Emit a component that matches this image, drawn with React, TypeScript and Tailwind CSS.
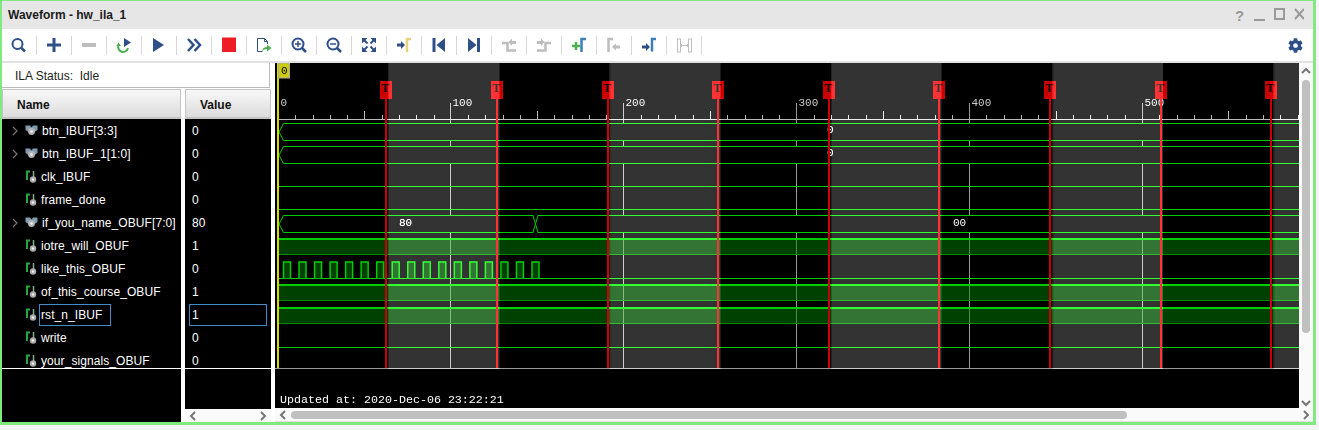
import { FaCog } from 'react-icons/fa';

const NAVY = '#2f4f88';
const GRAY = '#bdbdbd';
const BLUE = '#3a7fb5';
const YELLOW = '#e8d27c';
const GREEN = '#4caf50';

function Corner({ rotate }: { rotate: number }) {
  return (
    <g transform={`rotate(${rotate} 10 10)`}>
      <polygon points="3,3 8.5,3 3,8.5" fill={NAVY} />
      <line x1="5" y1="5" x2="8.5" y2="8.5" stroke={NAVY} strokeWidth="2" />
    </g>
  );
}

const toolbarIcons = [
  <>
    <circle cx="8.5" cy="9" r="5" fill="none" stroke={NAVY} strokeWidth="2" />
    <line x1="12.5" y1="13" x2="16" y2="16.5" stroke={NAVY} strokeWidth="2.5" />
  </>,
  <path d="M8.5 3h3v5.5H17v3h-5.5V17h-3v-5.5H3v-3h5.5z" fill={NAVY} />,
  <rect x="3" y="8" width="14" height="4" fill={GRAY} />,
  <>
    <polygon points="10,3 17,7.5 10,12" fill={NAVY} />
    <path d="M4.5 10a5 5 0 1 0 9.5 3" fill="none" stroke={GREEN} strokeWidth="2" />
    <polygon points="2.5,11 7,11 4.5,7.5" fill={GREEN} />
  </>,
  <polygon points="4,3 15,10 4,17" fill={NAVY} />,
  <>
    <polyline points="4,4 9.5,10 4,16" fill="none" stroke={NAVY} strokeWidth="2.5" />
    <polyline points="10.5,4 16,10 10.5,16" fill="none" stroke={NAVY} strokeWidth="2.5" />
  </>,
  <rect x="3" y="2.5" width="14" height="14.5" fill="#ee1c24" />,
  <>
    <path d="M8.5 16.5H3.5v-13h7l3 3v2.5M10.5 3.5v3h3" fill="none" stroke={NAVY} strokeWidth="1" />
    <path d="M8 16q1-4 5-4V9.5l4.5 3.5-4.5 3.5V14q-3 0-5 2z" fill={GREEN} />
  </>,
  <>
    <circle cx="9" cy="9" r="5.5" fill="none" stroke={NAVY} strokeWidth="2" />
    <line x1="13" y1="13" x2="17" y2="17" stroke={NAVY} strokeWidth="2.5" />
    <path d="M6 9h6M9 6v6" stroke={NAVY} strokeWidth="1.5" />
  </>,
  <>
    <circle cx="9" cy="9" r="5.5" fill="none" stroke={NAVY} strokeWidth="2" />
    <line x1="13" y1="13" x2="17" y2="17" stroke={NAVY} strokeWidth="2.5" />
    <path d="M6 9h6" stroke={NAVY} strokeWidth="1.5" />
  </>,
  <>
    <Corner rotate={0} />
    <Corner rotate={90} />
    <Corner rotate={180} />
    <Corner rotate={270} />
  </>,
  <>
    <polygon points="3,8.5 7,8.5 7,6 11,10 7,14 7,11.5 3,11.5" fill={NAVY} />
    <path d="M13 17V4h4" fill="none" stroke={YELLOW} strokeWidth="2.5" />
  </>,
  <>
    <rect x="3.5" y="3" width="3" height="14" fill={NAVY} />
    <polygon points="16,3 7.5,10 16,17" fill={NAVY} />
  </>,
  <>
    <polygon points="4,3 12.5,10 4,17" fill={NAVY} />
    <rect x="13" y="3" width="3" height="14" fill={NAVY} />
  </>,
  <>
    <path d="M3 8h5.5v7.5H17" fill="none" stroke={GRAY} strokeWidth="2.5" />
    <polygon points="9.5,7 13,3.5 13,6 17,6 17,9 13,9 13,11" fill={GRAY} />
  </>,
  <>
    <path d="M17 8h-5.5v7.5H3" fill="none" stroke={GRAY} strokeWidth="2.5" />
    <polygon points="10.5,7 7,3.5 7,6 3,6 3,9 7,9 7,11" fill={GRAY} />
  </>,
  <>
    <path d="M3 11h8M7 7v8" stroke={GREEN} strokeWidth="2.5" />
    <path d="M12.5 17V4H17" fill="none" stroke={BLUE} strokeWidth="2.5" />
  </>,
  <>
    <path d="M4.5 17V4H9" fill="none" stroke={GRAY} strokeWidth="2.5" />
    <polygon points="8,12 12,8.5 12,10.5 16,10.5 16,13.5 12,13.5 12,15.5" fill={GRAY} />
  </>,
  <>
    <polygon points="3,10.5 7,10.5 7,8 11,12 7,16 7,13.5 3,13.5" fill={NAVY} />
    <path d="M13 16.5V4h4" fill="none" stroke={BLUE} strokeWidth="2.5" />
  </>,
  <>
    <rect x="3.5" y="4" width="3" height="13" fill="none" stroke={GRAY} strokeWidth="1" />
    <rect x="14.5" y="4" width="3" height="13" fill="none" stroke={GRAY} strokeWidth="1" />
    <path d="M7 10.5h7M8 9l-1.5 1.5L8 12M13 9l1.5 1.5L13 12" fill="none" stroke={GRAY} strokeWidth="1" />
  </>,
];

function BusIcon() {
  return (
    <svg width="13" height="11" viewBox="0 0 13 11" className="shrink-0">
      <path d="M0.5 0.5h4.5l1.5 2 1.5-2h4.5v4.5l-3 2h-6l-3-2z" fill="#7f9bb0" />
      <circle cx="6.5" cy="6.5" r="3.4" fill="#b5b5b5" />
      <circle cx="6.5" cy="6.5" r="1.3" fill="#eee" />
    </svg>
  );
}

function WireIcon() {
  return (
    <svg width="12" height="13" viewBox="0 0 12 13" className="shrink-0">
      <path d="M2 10V1.5H5" fill="none" stroke="#22a83f" strokeWidth="2" />
      <path d="M8.5 1v6" fill="none" stroke="#7fb08a" strokeWidth="1.5" />
      <circle cx="8" cy="9.5" r="3.2" fill="#aaa" />
      <circle cx="8" cy="9.5" r="1.2" fill="#eee" />
    </svg>
  );
}

function Chevron({ dir, thin }: { dir: 'up' | 'down' | 'left' | 'right'; thin?: boolean }) {
  const points = {
    up: '1,7 5,3 9,7',
    down: '1,3 5,7 9,3',
    left: '7,1 3,5 7,9',
    right: '3,1 7,5 3,9',
  }[dir];
  return (
    <svg width="10" height="10" viewBox="0 0 10 10" className="shrink-0">
      <polyline points={points} fill="none" stroke="#757575" strokeWidth={thin ? 1.2 : 2} />
    </svg>
  );
}

const signals = [
  { name: 'btn_IBUF[3:3]', value: '0', bus: true },
  { name: 'btn_IBUF_1[1:0]', value: '0', bus: true },
  { name: 'clk_IBUF', value: '0', bus: false },
  { name: 'frame_done', value: '0', bus: false },
  { name: 'if_you_name_OBUF[7:0]', value: '80', bus: true },
  { name: 'iotre_will_OBUF', value: '1', bus: false },
  { name: 'like_this_OBUF', value: '0', bus: false },
  { name: 'of_this_course_OBUF', value: '1', bus: false },
  { name: 'rst_n_IBUF', value: '1', bus: false, selected: true },
  { name: 'write', value: '0', bus: false },
  { name: 'your_signals_OBUF', value: '0', bus: false },
];

const LINE = '#00cc00';
const rowTop = (i: number) => 119 + 23 * i;

// vertical markers and the shaded clock bands behind them
const markers = [386, 497, 608, 718, 829, 939, 1050, 1161, 1271];
const bands = [
  [388, 499.5],
  [609.5, 720.5],
  [831, 941.5],
  [1052.5, 1163],
  [1273.5, 1299],
];
const ticks = Array.from({ length: 60 }, (_, j) => j);
const pulses = Array.from({ length: 17 }, (_, j) => 283.5 + 15.53 * j);

function Solid({ i }: { i: number }) {
  const top = rowTop(i);
  return (
    <>
      <rect x="279" y={top + 5} width="1020" height="16" fill="#008000" fillOpacity="0.5" />
      <line x1="279" x2="1299" y1={top + 5} y2={top + 5} stroke={LINE} strokeWidth="2" />
      <line x1="279" x2="1299" y1={top + 20.5} y2={top + 20.5} stroke="#008800" />
    </>
  );
}

function Low({ i }: { i: number }) {
  return <line x1="279" x2="1299" y1={rowTop(i) + 21.5} y2={rowTop(i) + 21.5} stroke={LINE} />;
}

function Bus({ i }: { i: number }) {
  const top = rowTop(i);
  const hi = top + 4.5;
  const lo = top + 21.5;
  return (
    <>
      <rect x="279" y={hi} width="1020" height="17" fill="#000" />
      <path
        d={`M1299 ${hi}H283.5L279 ${top + 13}L283.5 ${lo}H1299`}
        fill="none"
        stroke={LINE}
      />
    </>
  );
}

function WaveCanvas() {
  return (
    <svg width="1024" height="345" viewBox="275 63 1024 345" className="isolate block bg-black">
      {/* time grid and ruler */}
      {[450.5, 623.5, 796.5, 969.5, 1142.5].map((x) => (
        <line key={x} x1={x} x2={x} y1="103" y2="368" stroke="#999" />
      ))}
      <line x1="278" x2="1299" y1="119.5" y2="119.5" stroke="#bbb" />
      {ticks.map((j) => {
        if (j % 10 === 0) return null;
        const x = Math.round(278 + 17.28 * j) + 0.5;
        return <line key={j} x1={x} x2={x} y1={j % 5 === 0 ? 111 : 115} y2="119" stroke="#bbb" />;
      })}
      {[
        ['0', 280.5],
        ['100', 452.5],
        ['200', 625.5],
        ['300', 798.5],
        ['400', 971.5],
        ['500', 1144.5],
      ].map(([label, x]) => (
        <text key={label} x={x} y="106" fill="#ccc" fontSize="11" fontFamily="'Liberation Mono', monospace">
          {label}
        </text>
      ))}
      <line x1="275" x2="1299" y1="368.5" y2="368.5" stroke="#999" />

      {/* traces */}
      <Bus i={0} />
      <Bus i={1} />
      <Low i={2} />
      <Low i={3} />
      <Bus i={4} />
      <Solid i={5} />
      <Low i={6} />
      <Solid i={7} />
      <Solid i={8} />
      <Low i={9} />
      <rect x="533.5" y="214" width="4" height="20" fill="#000" />
      <path d="M533 215.5L538 232.5M533 232.5L538 215.5" fill="none" stroke={LINE} />
      {pulses.map((x) => (
        <g key={x}>
          <rect x={x} y="261.5" width="7" height="17" fill="#008000" fillOpacity="0.5" />
          <path d={`M${x} 278V262H${x + 7}V278`} fill="none" stroke={LINE} strokeWidth="1.5" />
        </g>
      ))}
      <g fill="#fff" fontSize="11" fontFamily="'Liberation Mono', monospace">
        <text x="827" y="133">0</text>
        <text x="827" y="156">0</text>
        <text x="399" y="226">80</text>
        <text x="953" y="226">00</text>
      </g>

      {/* triggers */}
      {markers.map((x) => (
        <g key={x}>
          <rect x={x - 1} y="99" width="2" height="269" fill="#cc0000" />
          <rect x={x - 6} y="81" width="12" height="18" fill="#cc0000" />
          <text
            x={x - 0.5}
            y="92"
            textAnchor="middle"
            fill="#000"
            fontSize="12"
            fontFamily="'Liberation Serif', serif"
            fontWeight="bold"
          >
            T
          </text>
        </g>
      ))}

      {/* bands add light over whatever is under them */}
      {bands.map(([a, b]) => (
        <g key={a} className="mix-blend-plus-lighter">
          <rect x={a} y="63" width={b - a} height="306" fill="#333" />
          <line x1={a + 0.5} x2={a + 0.5} y1="63" y2="369" stroke="#222" />
        </g>
      ))}

      {/* cursor */}
      <rect x="277" y="63" width="2" height="305" fill="#d8d800" />
      <rect x="278.5" y="63" width="11" height="15" fill="#cccc00" stroke="#aaa" strokeWidth="1" />
      <text x="281" y="74" fill="#000" fontSize="11" fontFamily="'Liberation Mono', monospace">0</text>

      <text x="280" y="403" fill="#fff" fontSize="11.67" fontFamily="'Liberation Mono', monospace">
        Updated at: 2020-Dec-06 23:22:21
      </text>
    </svg>
  );
}

export default function App() {
  return (
    <div className="h-[430px] w-[1319px] bg-[#f5f5f5] font-['Liberation_Sans',Arial,sans-serif] text-[12px]">
      <div className="flex h-[425px] w-[1316px] flex-col border-t border-r-[3px] border-b-[3px] border-l-2 border-[#80ea80] bg-white">
        {/* Title bar */}
        <div className="flex h-[28px] items-center justify-between bg-[#e6e6e6] pr-[9px] pl-[6px]">
          <span className="font-bold text-[#1a1a1a]">Waveform - hw_ila_1</span>
          <div className="flex items-center text-[#999]">
            <span className="w-[19px] text-[15px] leading-none font-bold">?</span>
            <svg width="50" height="14" viewBox="0 0 50 14">
              <rect x="0" y="11" width="11" height="2" fill="#999" />
              <rect x="21" y="1" width="9" height="10" fill="none" stroke="#999" strokeWidth="2" />
              <path d="M41 1l9 10M50 1l-9 10" stroke="#999" strokeWidth="2" />
            </svg>
          </div>
        </div>

        {/* Toolbar */}
        <div className="flex h-[34px] items-center justify-between border-b-2 border-[#e2e2e2] pr-[10px]">
          <div className="flex items-center">
            {toolbarIcons.map((icon, i) => (
              <div key={i} className="flex items-center">
                <div className="flex w-[34px] justify-center">
                  <svg width="20" height="20" viewBox="0 0 20 20">
                    {icon}
                  </svg>
                </div>
                <div className="h-[19px] w-px bg-[#d8d8d8]" />
              </div>
            ))}
          </div>
          <FaCog size={15} color={NAVY} />
        </div>

        <div className="flex min-h-0 flex-1">
          {/* Signal list */}
          <div className="flex w-[273px] flex-col">
            <div className="mr-[5px] flex h-[25px] items-center border-r border-b border-[#bbb] pt-[2px] pl-[13px] text-[#222]">
              ILA Status:&nbsp; Idle
            </div>
            <div className="flex min-h-0 flex-1 pt-[1px]">
              <div className="flex w-[179px] flex-col bg-black">
                <div className="flex h-[30px] items-center border border-b-2 border-[#c4c4c4] bg-gradient-to-b from-[#f8f8f8] to-[#dcdcdc] pt-[2px] pl-[14px] font-bold text-[#111]">
                  Name
                </div>
                <div className="h-[250px] overflow-hidden border-b border-white">
                  {signals.map((s) => (
                    <div key={s.name} className="flex h-[23px] items-center text-white">
                      <div className="flex w-[23px] shrink-0 justify-end pr-[5px]">
                        {s.bus && <Chevron dir="right" thin />}
                      </div>
                      <div className="flex w-[16px] shrink-0 justify-start">
                        {s.bus ? <BusIcon /> : <WireIcon />}
                      </div>
                      <span
                        className={
                          s.selected
                            ? '-ml-[2px] flex h-[22px] w-[72px] items-center border border-[#3f8ccb] pl-[1px] tracking-[0.08px]'
                            : s.bus
                              ? 'ml-[1px] whitespace-nowrap tracking-[0.08px]'
                              : 'whitespace-nowrap tracking-[0.08px]'
                        }
                      >
                        {s.name}
                      </span>
                    </div>
                  ))}
                </div>
              </div>
              <div className="ml-[4px] flex w-[86px] flex-col bg-black">
                <div className="flex h-[30px] items-center border border-b-2 border-[#c4c4c4] bg-gradient-to-b from-[#f8f8f8] to-[#dcdcdc] pt-[2px] pl-[14px] font-bold text-[#111]">
                  Value
                </div>
                <div className="h-[250px] overflow-hidden border-b border-white">
                  {signals.map((s) => (
                    <div key={s.name} className="flex h-[23px] items-center px-[4px] text-white">
                      <span
                        className={
                          s.selected
                            ? 'flex h-[22px] w-[78px] items-center border border-[#3f8ccb] pl-[2px]'
                            : 'pl-[3px]'
                        }
                      >
                        {s.value}
                      </span>
                    </div>
                  ))}
                </div>
                <div className="flex-1" />
                <div className="flex h-[13px] items-center justify-between bg-[#fafafa] px-[3px]">
                  <Chevron dir="left" />
                  <Chevron dir="right" />
                </div>
              </div>
            </div>
          </div>

          {/* Waveform */}
          <div className="flex flex-1 flex-col">
            <div className="flex h-[345px]">
              <WaveCanvas />
              <div className="flex w-[14px] flex-col items-center bg-[#fafafa] pt-[3px] pr-[1px]">
                <Chevron dir="up" />
                <div className="mt-[4px] h-[253px] w-[8px] rounded-full bg-[#c0c0c0]" />
                <div className="flex-1" />
                <Chevron dir="down" />
              </div>
            </div>
            <div className="flex h-[13px] items-center bg-[#fafafa] pr-[2px] pl-[3px]">
              <Chevron dir="left" />
              <div className="ml-[3px] h-[8px] w-[836px] rounded-full bg-[#c0c0c0]" />
              <div className="flex-1" />
              <Chevron dir="right" />
            </div>
            <div className="h-px bg-[#e0e0e0]" />
          </div>
        </div>
      </div>
    </div>
  );
}
